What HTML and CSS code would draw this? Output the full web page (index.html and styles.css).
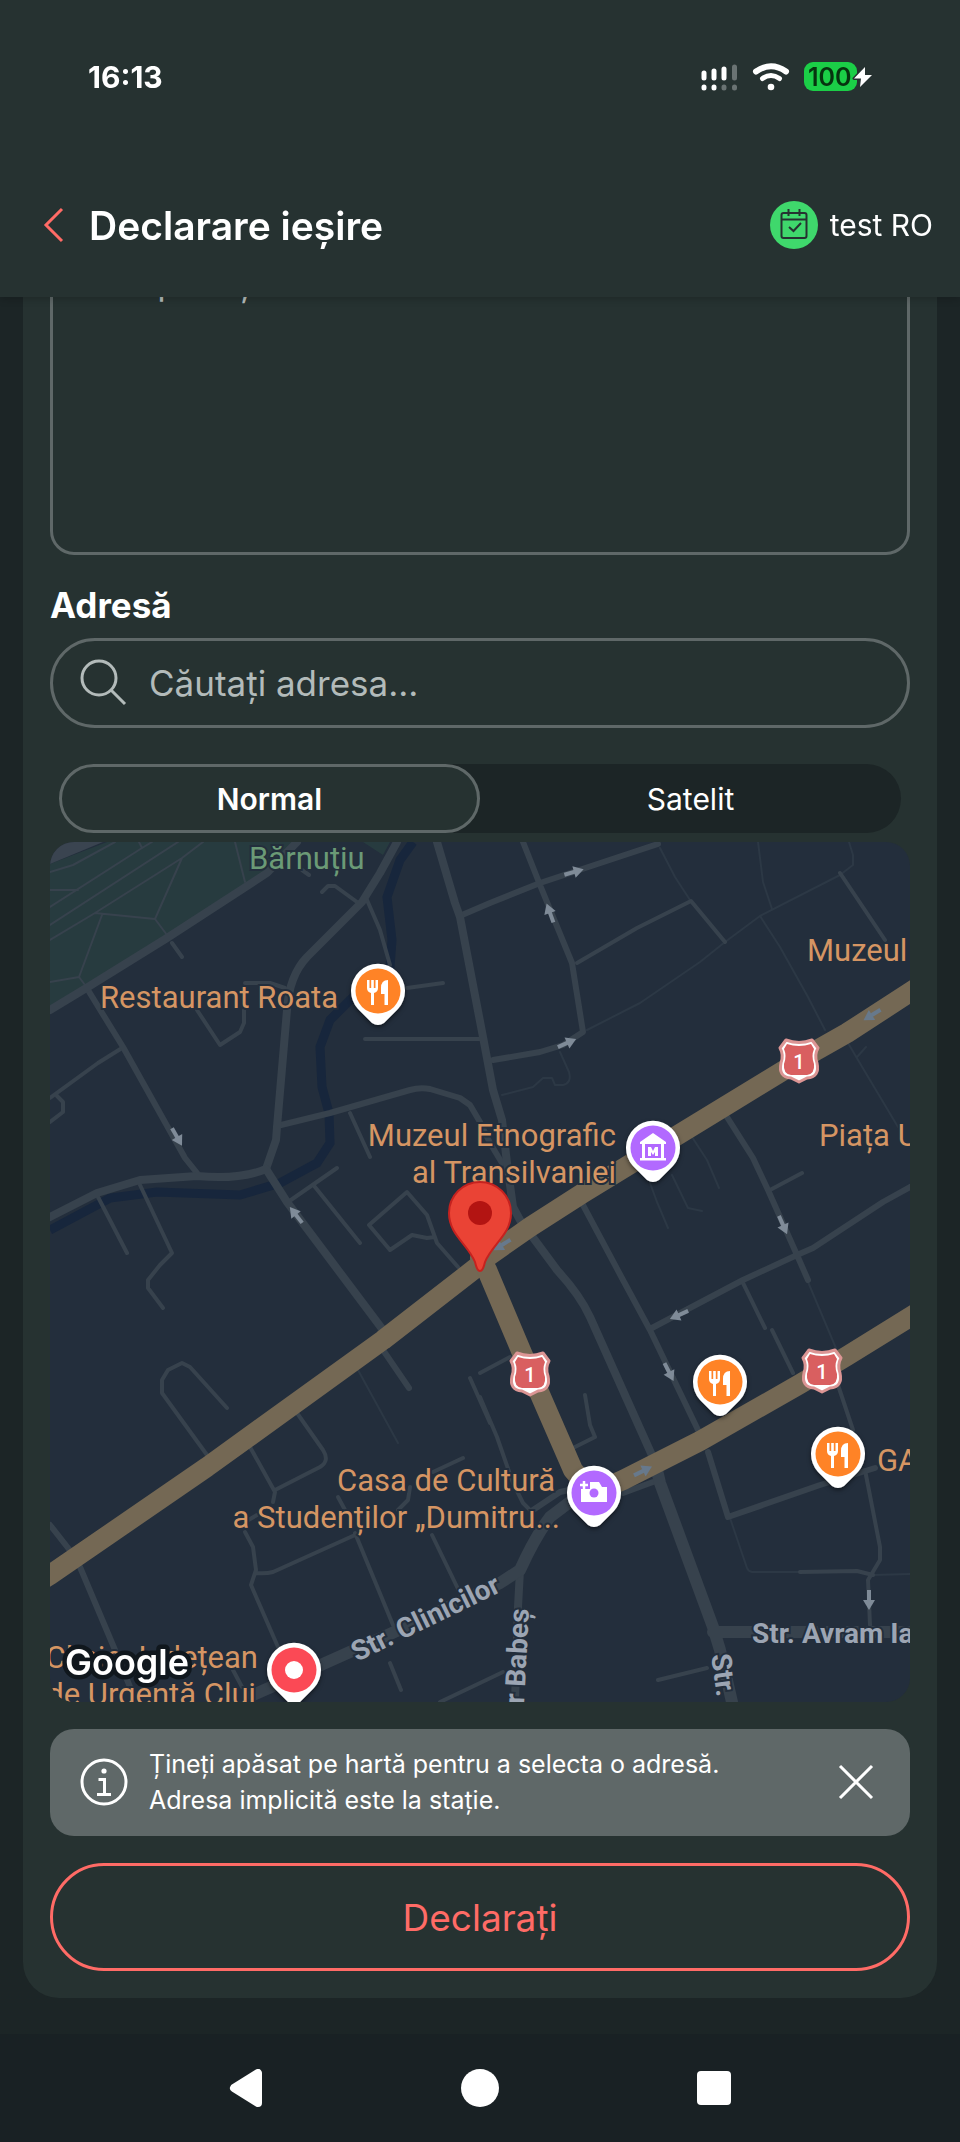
FILE: index.html
```html
<!DOCTYPE html>
<html lang="ro">
<head>
  <meta charset="UTF-8" />
  <meta name="viewport" content="width=device-width, initial-scale=1.0" />
  <title>Declarare ieșire</title>
  <link rel="stylesheet" href="styles.css">
</head>
<body>
  <header class="header">
    <div class="status-bar">
      <span class="time">16:13</span>
      <div class="status-icons">
        <svg width="38" height="30" viewBox="0 0 38 30" stroke-width="5" stroke-linecap="round" stroke="#fff">
          <path d="M4 11v5M14 9v7M24 7v9M4 25v1M14 25v1" />
          <path d="M34.500 5v11M24 25v1M34.500 25v1" stroke="#6a7373" />
        </svg>
        <svg width="38" height="30" viewBox="0 0 38 30" fill="none" stroke="#fff" stroke-linecap="round">
          <path d="M4 9.500Q19-1 34 9.500" stroke-width="6" />
          <path d="M10.500 16.500Q19 10.500 27.500 16.500" stroke-width="5" />
          <circle cx="19" cy="25" r="3.300" fill="#fff" stroke="none" />
        </svg>
        <div class="battery">
          <span>100</span>
          <svg class="bolt" width="22" height="24" viewBox="0 0 22 24">
            <path d="M13 2 2 13.500h7L8 22l12-12h-7z" fill="#fff" stroke="#263231" stroke-width="3" paint-order="stroke" stroke-linejoin="round" />
          </svg>
        </div>
      </div>
    </div>
    <div class="title-bar">
      <button type="button" class="back" aria-label="Înapoi">
        <svg width="22" height="36" viewBox="0 0 22 36" fill="none" stroke="#ff6b66" stroke-width="3"><path d="M20 2 4 18l16 16" /></svg>
      </button>
      <h1>Declarare ieșire</h1>
      <div class="user">
        <svg width="48" height="48" viewBox="0 0 48 48" fill="none" stroke="#263231" stroke-width="2">
          <circle cx="24" cy="24" r="24" fill="#3fd86c" stroke="none" />
          <rect x="11.500" y="12" width="25" height="25" rx="2" />
          <path d="M11.500 18.500h25M18.500 8v7M29.500 8v7M19 26l4.500 4 7.500-8" />
        </svg>
        <span>test RO</span>
      </div>
    </div>
  </header>

  <main class="content">
    <form class="card">
      <textarea class="description" aria-label="Descriere" placeholder="Completați..."></textarea>

      <label class="label" for="address">Adresă</label>
      <div class="search">
        <svg width="48" height="48" viewBox="0 0 48 48" fill="none" stroke="#b3bbba" stroke-width="3">
          <circle cx="19" cy="19" r="17" /><path d="m31 31 14 14" />
        </svg>
        <input type="text" id="address" placeholder="Căutați adresa..." />
      </div>

      <div class="tabs">
        <button type="button" class="tab active">Normal</button>
        <button type="button" class="tab">Satelit</button>
      </div>

      <svg class="map" viewBox="0 0 860 860" preserveAspectRatio="xMidYMid slice">
        <defs>
          <g id="arrow"><path d="M-10 0H2" stroke="currentColor" stroke-width="4" /><path d="M0-6 10 0 0 6z" fill="currentColor" /></g>
          <path id="pin" d="M-20 18A27 27 0 1 1 20 18L6 32Q0 36-6 32Z" fill="#fff" />
          <g id="food">
            <use href="#pin" />
            <circle r="22.500" fill="#ff8326" />
            <path d="M-11-11V-3Q-11 1-7 2V14H-4V2Q0 1 0-3V-11H-2.500V-3H-4.200V-11H-6.800V-3H-8.500V-11ZM10-11Q3-11 3-3V3H6.500V14H10Z" fill="#fff" />
          </g>
          <g id="shield">
            <path d="M-13-20Q0-15 13-20L19-12Q15-5 18 3Q21 17 8 18L0 22-8 18Q-21 17-18 3Q-15-5-19-12Z" fill="#fff" stroke="#dc9594" stroke-width="3" stroke-linejoin="round" />
            <path d="M-12-16Q0-12 12-16L15-11Q12-4 15 4Q16 14 8 15H-8Q-16 14-15 4Q-12-4-15-11Z" fill="#d95f60" />
            <text class="route" x="0" y="9">1</text>
          </g>
          <filter id="shadow" x="-30%" y="-30%" width="160%" height="160%">
            <feDropShadow dx="0" dy="2" stdDeviation="2" flood-color="#000" flood-opacity=".5" />
          </filter>
        </defs>

        <rect width="860" height="860" fill="#232e3c" />

        <!-- park -->
        <path d="M0 22 57 0H247L217 31 117 96 0 165ZM313 0 333 13 340 0Z" fill="#273b3f" />
        <path d="M0 0H53L0 22Z" fill="#3a4450" />
        <g class="road path">
          <path d="M0 48H28M0 30 23 23 65 0M0 65 92 6 102 0M0 83 128 0M0 98 45 71 132 16 153 0M45 71 105 77 117 93M105 77 132 16M52 73 29 135 0 140M29 135 35 143M185 0 195 40M89 0 92 6" />
        </g>

        <!-- river -->
        <path class="river" d="M363 0 350 18 337 55 342 98 340 125 303 155 280 178 270 205 272 245 279 271 280 301 267 321 230 341 190 353 107 350 60 356 0 388" />

        <g class="road thin">
          <path d="M610 6 625 35 640 58M675 100 710 74 790 33 803 23V13L799 0M708 0 713 40 722 67M710 74 730 105 758 155 775 188M798 201 808 218 848 285M807 215 816 205M675 100 650 120 590 161 537 188" />
          <path d="M452 253 483 245 493 236H502L505 243H513Q522 241 519 230L510 210M642 295 657 318 669 346M622 333 638 366 652 369M600 341 607 360 618 386" />
          <path d="M753 428 788 511M680 676 697 726Q698 729 702 730H750M823 733 860 732M308 528 348 601" />
        </g>

        <g class="road small">
          <path d="M122 101 132 115M252 28 259 33M72 206 48 221 0 256M7 254 13 260V270L0 280M272 50 278 44H285L307 60M317 58 330 88 340 123M357 146 393 141M315 197H433" />
          <path d="M527 121 587 86 641 59 675 100M790 31 835 98M300 271 320 315M238 360 287 326M265 345 310 401M340 408 319 383 357 350 377 373 387 401 408 425M340 408 362 393 377 396 385 395" />
          <path d="M48 355 77 411M90 343 122 411 110 423 98 438V446L113 466M195 141H220L235 146M147 168 170 203 190 190 194 181V168M720 348 752 331" />
          <path d="M787 540 803 588M750 730 807 729 823 733M815 628 830 705V718L818 738 820 783M693 441 715 486M722 488 743 531M430 531 460 515M430 555 447 595 463 641 473 661 483 671M535 553 540 583 545 595 523 606" />
          <path d="M157 613 112 551V538L118 528 132 521 140 525 177 566M200 605 225 650 223 660M207 673 195 680M225 648 270 625Q280 619 273 608L247 571M195 690 203 705 206 728 201 743 228 805M205 731Q216 732 223 730L305 693M305 691 343 783M288 655 295 668" />
          <path d="M348 668 358 658 360 645M383 630 413 616M382 693 410 751M420 536 440 581M340 821 351 848M183 828 192 845M608 838 657 826M390 860 430 841 453 830" />
        </g>

        <g class="road medium">
          <path d="M38 148 73 205 135 316 147 331M412 73 440 61 490 41 608 2M473 0 490 43 522 121 533 190 513 203 490 210 443 218M231 283 280 271 360 248Q370 245 380 247L410 256 420 263 430 280 440 301 452 321" />
          <path d="M677 275 703 316 718 348 747 413 758 438M860 345 833 360 763 406 747 413 693 438 600 487M533 363 573 438 600 488 648 588M658 610 678 675 770 643 825 626M0 683 22 711M30 725 65 808 80 845M333 508 359 546M483 668 510 650 533 645M573 651 603 640" />
        </g>

        <g class="road large">
          <path d="M0 168 38 145 117 96 217 31 247 0M347 0 330 31 312 60 257 115Q239 134 237 168L227 285 226 298 216 327M387 0 405 61 410 75 433 195 443 248 452 278 457 321 463 365 470 378 507 428Q530 453 540 475L605 620" />
          <path d="M0 375 47 351 90 338 147 334Q190 338 216 327M216 327 237 360 333 488M470 728 468 765 465 860M573 634 603 617" />
        </g>

        <g class="road avenue">
          <path d="M533 650 500 675Q485 695 470 728L450 741 340 792 273 822 203 853M605 620 610 641 663 785 670 808 682 860M663 790H860" />
        </g>

        <g class="road main">
          <path d="M-8 738 0 733 157 625 333 498 427 425 440 413 480 385 533 351 677 263 767 208 797 191 868 145" />
          <path d="M430 416 437 428 472 511 523 628 543 651 573 638 650 599 750 542 797 514 868 470" />
        </g>

        <g class="arrows">
          <use href="#arrow" transform="translate(127 295) rotate(60)" />
          <use href="#arrow" transform="translate(246 373) rotate(-128)" />
          <use href="#arrow" transform="translate(524 30) rotate(-16)" />
          <use href="#arrow" transform="translate(500 71) rotate(-110)" />
          <use href="#arrow" transform="translate(517 201) rotate(-24)" />
          <use href="#arrow" transform="translate(733 383) rotate(66)" />
          <use href="#arrow" transform="translate(629 473) rotate(156)" />
          <use href="#arrow" transform="translate(619 530) rotate(63)" />
          <use href="#arrow" transform="translate(819 758) rotate(90)" />
        </g>
        <g class="arrows blue">
          <use href="#arrow" transform="translate(822 173) rotate(148)" />
          <use href="#arrow" transform="translate(452 403) rotate(148)" />
          <use href="#arrow" transform="translate(593 629) rotate(-26)" />
        </g>

        <g class="streets">
          <text transform="translate(307 820) rotate(-26)">Str. Clinicilor</text>
          <text x="702" y="801">Str. Avram Iancu</text>
          <text class="end" transform="translate(479 767) rotate(-87)">Victor Babeș</text>
          <text transform="translate(661 813) rotate(82)">Str.</text>
        </g>

        <g class="places">
          <text class="park-name" x="199" y="27">Bărnuțiu</text>
          <text x="50" y="166">Restaurant Roata</text>
          <text class="end" x="566" y="304">Muzeul Etnografic</text>
          <text class="end" x="566" y="341">al Transilvaniei</text>
          <text x="757" y="119">Muzeul</text>
          <text x="769" y="304">Piața Unirii</text>
          <text class="end" x="505" y="649">Casa de Cultură</text>
          <text class="end" x="510" y="686">a Studenților „Dumitru...</text>
          <text x="827" y="629">GARD</text>
          <text class="end" x="208" y="826">Clinic Județean</text>
          <text class="end" x="206" y="863">de Urgență Cluj</text>
        </g>

        <use href="#shield" x="749" y="218" />
        <use href="#shield" x="480" y="531" />
        <use href="#shield" x="772" y="528" />

        <g filter="url(#shadow)">
          <use href="#food" x="328" y="149" />
          <use href="#food" x="670" y="540" />
          <use href="#food" x="788" y="612" />
          <g transform="translate(603 306)">
            <use href="#pin" />
            <circle r="22.500" fill="#b269ff" />
            <path d="M0-15 13-6V-4H-13V-6ZM-11-4H-8V11H-11ZM8-4H11V11H8ZM-13 10H13V12.500H-13ZM-5-1H-2L0 3 2-1H5V8H2V4L0 7-2 4V8H-5Z" fill="#fff" />
          </g>
          <g transform="translate(544 651)">
            <use href="#pin" />
            <circle r="22.500" fill="#b269ff" />
            <path d="M-13-4H-4V-11H5L8-6H13V9H-13Z" fill="#fff" />
            <circle r="4.500" fill="#b269ff" />
            <path d="M-10-12V-4M-14-8H-6" stroke="#fff" stroke-width="2.500" />
          </g>
          <g transform="translate(244 828)">
            <use href="#pin" />
            <circle r="22.500" fill="#fb4955" />
            <circle r="9" fill="#fff" />
          </g>
        </g>

        <path d="M430 429Q427 429 425 420C418 402 399 393 399 371A31 31 0 0 1 461 371C461 393 442 402 435 420Q433 429 430 429Z" fill="#ea4335" stroke="#c5221f" stroke-width="2" />
        <circle cx="430" cy="371" r="12" fill="#b31412" />

        <text class="google" x="15" y="833">Google</text>
      </svg>

      <div class="info">
        <svg width="48" height="48" viewBox="0 0 48 48" fill="none" stroke="#fff" stroke-width="3">
          <circle cx="24" cy="24" r="22" />
          <circle cx="24" cy="13" r="2.600" fill="#fff" stroke="none" />
          <path d="M18.500 21.500H24.500V36M17 36.500H31" />
        </svg>
        <p>Țineți apăsat pe hartă pentru a selecta o adresă. Adresa implicită este la stație.</p>
        <button type="button" class="close" aria-label="Închide">
          <svg width="48" height="48" viewBox="0 0 48 48" stroke="#fff" stroke-width="3"><path d="m8 8 32 32M40 8 8 40" /></svg>
        </button>
      </div>

      <button type="submit" class="submit">Declarați</button>
    </form>
  </main>

  <nav class="nav">
    <button type="button" aria-label="Back">
      <svg width="38" height="38" viewBox="0 0 38 38"><path d="M31 4V34L7 19Z" fill="#fff" stroke="#fff" stroke-width="8" stroke-linejoin="round" /></svg>
    </button>
    <button type="button" aria-label="Home">
      <svg width="38" height="38" viewBox="0 0 38 38"><circle cx="19" cy="19" r="19" fill="#fff" /></svg>
    </button>
    <button type="button" aria-label="Recents">
      <svg width="38" height="38" viewBox="0 0 38 38"><rect x="2" y="2" width="34" height="34" rx="4" fill="#fff" /></svg>
    </button>
  </nav>
</body>
</html>
```
FILE: styles.css
```css
* {
  box-sizing: border-box;
}
body {
  font-family: Inter, sans-serif;
  background-color: #1c2526;
  color: white;
  display: flex;
  flex-direction: column;
  height: 100vh;
  margin: 0;
}
button {
  font-family: inherit;
  color: inherit;
  background: none;
  border: none;
  padding: 0;
  cursor: pointer;
}
svg {
  display: block;
  flex-shrink: 0;
}

/* header */
.header {
  background: #263231;
  position: relative;
  z-index: 1;
  box-shadow: 0 2px 8px rgba(0, 0, 0, 0.2);
}
.status-bar {
  display: flex;
  justify-content: space-between;
  align-items: center;
  height: 153px;
  padding: 0 88px;
}
.time {
  font-size: 30px;
  font-weight: 700;
}
.status-icons {
  display: flex;
  align-items: center;
  gap: 14px;
}
.battery {
  display: flex;
  align-items: center;
  background: #1bce47;
  color: #07330f;
  height: 29px;
  width: 53px;
  padding-left: 4px;
  margin-right: 15px;
  border-radius: 9px;
  font-size: 25px;
  font-weight: 600;
  position: relative;
}
.bolt {
  position: absolute;
  left: 48px;
  top: 3px;
}
.title-bar {
  display: flex;
  align-items: center;
  height: 144px;
  padding: 0 27px 0 42px;
}
h1 {
  font-size: 39px;
  font-weight: 600;
  margin: 0 0 0 25px;
}
.user {
  display: flex;
  align-items: center;
  gap: 12px;
  margin-left: auto;
  font-size: 30px;
}

/* the list opens scrolled to its end */
.content {
  flex: 1;
  min-height: 0;
  overflow-y: auto;
  scrollbar-width: none;
  display: flex;
  flex-direction: column-reverse;
  padding: 0 23px 36px;
}
.card {
  display: flex;
  flex-direction: column;
  background: #263231;
  border-radius: 36px;
  padding: 27px;
}
.description {
  font-family: inherit;
  font-size: 35px;
  line-height: 51px;
  color: white;
  background: none;
  border: 3px solid #5f6868;
  border-radius: 24px;
  height: 315px;
  padding: 14px 27px;
  resize: none;
}
.label {
  font-size: 35px;
  line-height: 50px;
  font-weight: 700;
  margin: 25px 0 8px;
}
.search {
  display: flex;
  align-items: center;
  gap: 21px;
  height: 90px;
  padding: 0 27px;
  border: 3px solid #5f6868;
  border-radius: 45px;
}
.search input {
  flex: 1;
  min-width: 0;
  font-family: inherit;
  font-size: 35px;
  color: white;
  background: none;
  border: none;
  outline: none;
  padding: 0;
}
::placeholder {
  color: #b3bbba;
  opacity: 1;
}
.tabs {
  display: flex;
  background: #1c2526;
  border-radius: 35px;
  margin: 36px 9px 9px;
}
.tab {
  flex: 1;
  height: 69px;
  font-size: 30px;
  border: 3px solid transparent;
  border-radius: 35px;
}
.tab.active {
  background: #263231;
  border-color: #5f6868;
  font-weight: 600;
}
.info {
  display: flex;
  align-items: center;
  gap: 21px;
  background: #5f6868;
  border-radius: 24px;
  padding: 17px 30px 18px;
  margin: 27px 0;
}
.info p {
  flex: 1;
  max-width: 600px;
  font-size: 25px;
  line-height: 36px;
  margin: 0;
}
.close {
  margin-left: auto;
}
.submit {
  height: 108px;
  font-size: 37px;
  color: #ff6b66;
  border: 3px solid #ff6b66;
  border-radius: 54px;
}

/* map */
.map {
  width: 100%;
  aspect-ratio: 1;
  border-radius: 24px;
  font-family: Roboto, sans-serif;
}
.road {
  fill: none;
  stroke: #37424d;
  stroke-linecap: round;
  stroke-linejoin: round;
}
.path {
  stroke-width: 2px;
}
.thin {
  stroke: #2c3845;
  stroke-width: 2px;
}
.small {
  stroke-width: 4px;
}
.medium {
  stroke-width: 6px;
}
.large {
  stroke-width: 8px;
}
.avenue {
  stroke-width: 12px;
}
.main {
  stroke: #746854;
  stroke-width: 20px;
}
.river {
  fill: none;
  stroke: #17263c;
  stroke-width: 9px;
}
.arrows {
  color: #7f8b98;
}
.arrows.blue {
  color: #67798c;
}
.places {
  font-size: 31px;
  fill: #d59563;
  stroke: #232e3c;
  stroke-width: 4px;
  paint-order: stroke;
}
.park-name {
  fill: #6b9a76;
}
.streets {
  font-size: 28px;
  font-weight: 700;
  fill: #9ca5b3;
  stroke: #232e3c;
  stroke-width: 4px;
  paint-order: stroke;
}
.end {
  text-anchor: end;
}
.route {
  font-size: 20px;
  font-weight: 500;
  fill: white;
  text-anchor: middle;
}
.google {
  font-family: Inter, sans-serif;
  font-size: 36px;
  font-weight: 600;
  fill: white;
  stroke: #10171d;
  stroke-width: 9px;
  stroke-linejoin: round;
  paint-order: stroke;
}

/* system navigation */
.nav {
  display: flex;
  justify-content: center;
  align-items: center;
  gap: 196px;
  height: 108px;
  background: #192124;
}
```
